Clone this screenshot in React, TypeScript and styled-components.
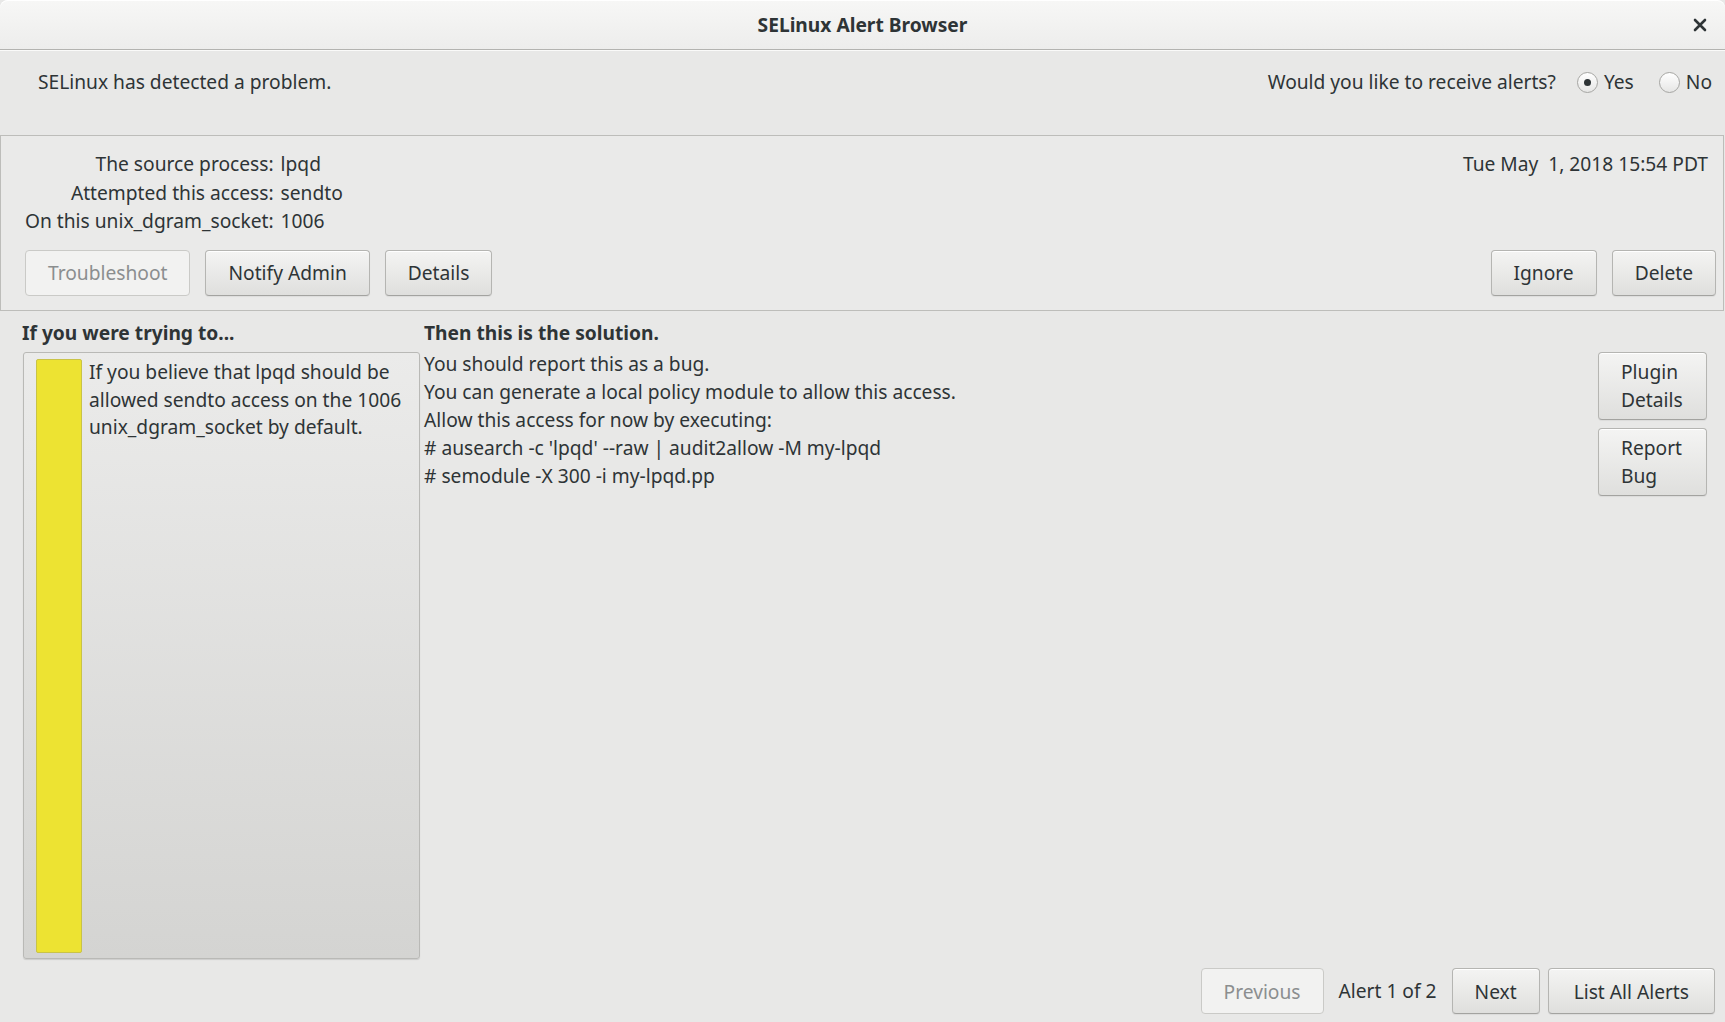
import React from "react";
import styled, { createGlobalStyle } from "styled-components";

const GlobalStyle = createGlobalStyle`
  html, body {
    margin: 0;
    padding: 0;
    background: #e8e8e7;
  }
  body {
    font-family: "Noto Sans", "DejaVu Sans", sans-serif;
    font-size: 19.2px;
    color: #2e3436;
  }
`;

const facts = [
  { label: "The source process:", value: "lpqd" },
  { label: "Attempted this access:", value: "sendto" },
  { label: "On this unix_dgram_socket:", value: "1006" },
];

const solution = [
  "You should report this as a bug.",
  "You can generate a local policy module to allow this access.",
  "Allow this access for now by executing:",
  "# ausearch -c 'lpqd' --raw | audit2allow -M my-lpqd",
  "# semodule -X 300 -i my-lpqd.pp",
];

const App = () => {
  return (
    <Window>
      <GlobalStyle />
      <TitleBar>
        <span />
        <Title>SELinux Alert Browser</Title>
        <CloseButton aria-label="Close">
          <svg width="14" height="14" viewBox="0 0 14 14">
            <path d="M2 2 L12 12 M12 2 L2 12" stroke="#2e3436" strokeWidth="2.6" strokeLinecap="round" />
          </svg>
        </CloseButton>
      </TitleBar>

      <InfoBar>
        <span>SELinux has detected a problem.</span>
        <AlertChoice>
          <span>Would you like to receive alerts?</span>
          <RadioLabel>
            <Radio checked />
            Yes
          </RadioLabel>
          <RadioLabel>
            <Radio />
            No
          </RadioLabel>
        </AlertChoice>
      </InfoBar>

      <DetailsPanel>
        <PanelRow>
          <Facts>
            {facts.map((f) => (
              <React.Fragment key={f.label}>
                <FactLabel>{f.label}</FactLabel>
                <span>{f.value}</span>
              </React.Fragment>
            ))}
          </Facts>
          <span>Tue May &nbsp;1, 2018 15:54 PDT</span>
        </PanelRow>
        <PanelRow>
          <ButtonGroup>
            <Button disabled>Troubleshoot</Button>
            <Button>Notify Admin</Button>
            <Button>Details</Button>
          </ButtonGroup>
          <ButtonGroup>
            <Button>Ignore</Button>
            <Button>Delete</Button>
          </ButtonGroup>
        </PanelRow>
      </DetailsPanel>

      <Main>
        <Heading>If you were trying to...</Heading>
        <Heading>Then this is the solution.</Heading>
        <span />

        <ReasonBox>
          <Severity />
          <ReasonText>
            If you believe that lpqd should be allowed sendto access on the 1006 unix_dgram_socket by default.
          </ReasonText>
        </ReasonBox>
        <Solution>
          {solution.map((line) => (
            <div key={line}>{line}</div>
          ))}
        </Solution>
        <SideButtons>
          <TallButton>
            Plugin
            <br />
            Details
          </TallButton>
          <TallButton>
            Report
            <br />
            Bug
          </TallButton>
        </SideButtons>

        <Footer>
          <Button disabled>Previous</Button>
          <Counter>Alert 1 of 2</Counter>
          <Button>Next</Button>
          <Button $wide>List All Alerts</Button>
        </Footer>
      </Main>
    </Window>
  );
};

export default App;

const Window = styled.div`
  width: 1725px;
  height: 1022px;
  display: flex;
  flex-direction: column;
  overflow: hidden;
  background: #e8e8e7;
`;

const TitleBar = styled.div`
  height: 49px;
  display: grid;
  grid-template-columns: 1fr auto 1fr;
  align-items: center;
  background: linear-gradient(#f7f7f6, #ededec);
  border-bottom: 1px solid #b3b3b0;
  border-radius: 8px 8px 0 0;
  box-shadow: inset 0 1px 0 #ffffff;
`;

const Title = styled.div`
  font-weight: bold;
`;

const CloseButton = styled.div`
  justify-self: end;
  display: flex;
  align-items: center;
  margin-right: 18px;
  margin-top: 1px;
`;

const InfoBar = styled.div`
  height: 85px;
  box-sizing: border-box;
  padding: 17px 13px 0 38px;
  display: flex;
  justify-content: space-between;
  align-items: flex-start;
  line-height: 28px;
  border-top: 1px solid #fafaf9;
`;

const AlertChoice = styled.div`
  display: flex;
  align-items: center;
  gap: 21px;

  & > :last-child {
    margin-left: 4px;
  }
`;

const RadioLabel = styled.label`
  display: flex;
  align-items: center;
  gap: 6px;
`;

const Radio = styled.span<{ checked?: boolean }>`
  width: 21px;
  height: 21px;
  box-sizing: border-box;
  border-radius: 50%;
  border: 1px solid #a6a6a3;
  background: linear-gradient(#ffffff, #e6e6e5);
  display: flex;
  align-items: center;
  justify-content: center;

  &::after {
    content: "";
    width: 7px;
    height: 7px;
    border-radius: 50%;
    background: ${(p) => (p.checked ? "#2e3436" : "transparent")};
  }
`;

const DetailsPanel = styled.div`
  height: 176px;
  box-sizing: border-box;
  margin: 0 1px 0 0;
  border: 1px solid #bdbdba;
  padding: 14px 7px 14px 24px;
  display: flex;
  flex-direction: column;
  justify-content: space-between;
  background: #eaeae9;
`;

const PanelRow = styled.div`
  display: flex;
  justify-content: space-between;
  align-items: flex-start;
  line-height: 28.5px;
  padding-right: 8px;

  &:last-child {
    padding-right: 0;
  }
`;

const Facts = styled.div`
  display: grid;
  grid-template-columns: auto auto;
  column-gap: 7px;
`;

const FactLabel = styled.span`
  text-align: right;
`;

const ButtonGroup = styled.div`
  display: flex;
  gap: 15px;
`;

const Button = styled.button<{ $wide?: boolean }>`
  height: 46px;
  padding: 0 ${(p) => (p.$wide ? "25px" : "22px")};
  font: inherit;
  color: #2e3436;
  border: 1px solid #b5b5b2;
  border-bottom-color: #a3a3a0;
  border-radius: 4px;
  background: linear-gradient(#f4f4f3, #dfdfdd);
  box-shadow: inset 0 1px 0 #ffffff, 0 1px 1px rgba(0, 0, 0, 0.06);

  &:disabled {
    color: #8b8e8f;
    background: #f2f2f1;
    border-color: #cacac7;
    box-shadow: none;
  }
`;

const Main = styled.div`
  flex: 1;
  display: grid;
  grid-template-columns: 398px 1fr 117px;
  grid-template-rows: auto 1fr auto;
  column-gap: 4px;
  padding: 8px 10px 8px 22px;
  min-height: 0;
`;

const Heading = styled.div`
  font-weight: bold;
  line-height: 28px;
  margin-bottom: 5px;
`;

const ReasonBox = styled.div`
  margin-left: 1px;
  display: flex;
  gap: 7px;
  padding: 6px 6px 5px 12px;
  border: 1px solid #b9b9b6;
  border-radius: 3px;
  background: linear-gradient(#ebebea, #d4d4d2);
  box-shadow: 0 1px 1px rgba(0, 0, 0, 0.12);
`;

const Severity = styled.div`
  flex: none;
  width: 44px;
  border: 1px solid #c9c347;
  border-radius: 2px;
  background: #ede332;
`;

const ReasonText = styled.div`
  line-height: 27.5px;
  margin-top: -1px;
`;

const Solution = styled.div`
  line-height: 28px;
  margin-top: -2px;
`;

const SideButtons = styled.div`
  margin-right: 8px;
  display: flex;
  flex-direction: column;
  gap: 8px;
`;

const TallButton = styled(Button)`
  height: auto;
  padding: 5px 0 5px 22px;
  text-align: left;
  line-height: 28px;
`;

const Footer = styled.div`
  grid-column: 1 / -1;
  margin-top: 9px;
  display: flex;
  justify-content: flex-end;
  align-items: center;
  gap: 15px;

  & > :last-child {
    margin-left: -7px;
  }
`;

const Counter = styled.span`
  line-height: 28px;
`;
